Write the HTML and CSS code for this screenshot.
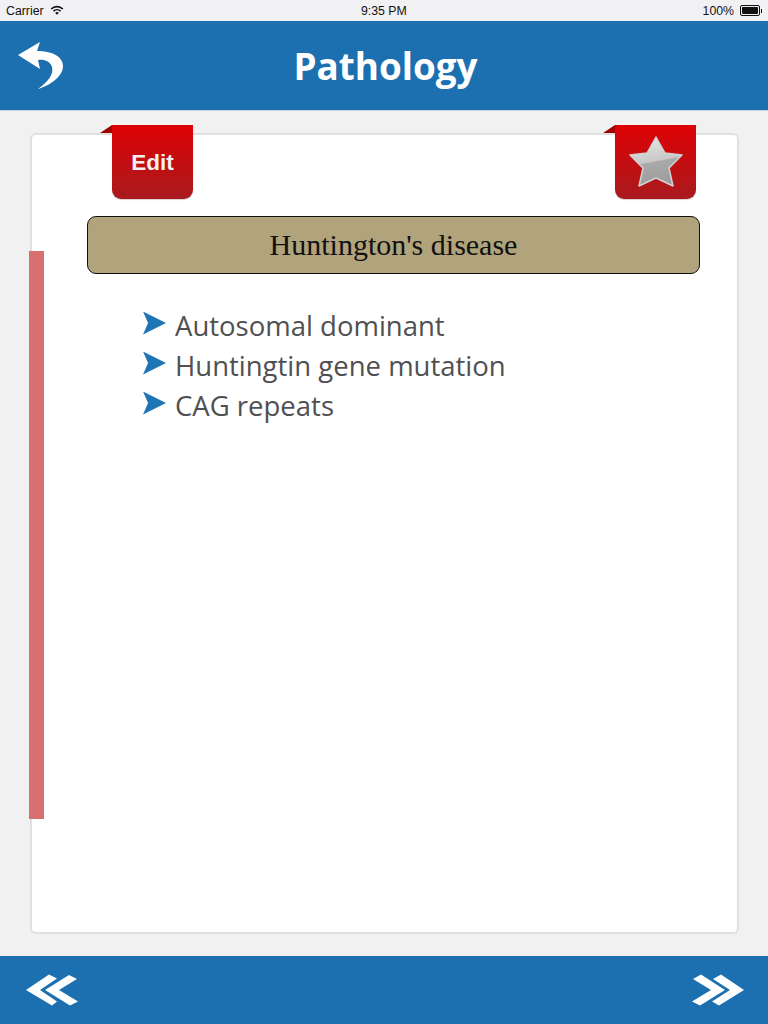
FILE: index.html
```html
<!DOCTYPE html>
<html lang="en">
<head>
    <meta charset="UTF-8">
    <meta name="viewport" content="width=device-width, initial-scale=1.0">
    <title>Pathology</title>
    <link rel="stylesheet" href="styles.css">
</head>
<body>
    <div class="status-bar">
        <div class="status-left">
            <span>Carrier</span>
            <svg class="wifi" width="14" height="10" viewBox="0 0 14 10">
                <path d="M0.6 3.4 A9 9 0 0 1 13.4 3.4 L12.2 4.6 A7.3 7.3 0 0 0 1.8 4.6 Z" fill="#111"/>
                <path d="M2.9 5.6 A5.8 5.8 0 0 1 11.1 5.6 L9.9 6.8 A4.1 4.1 0 0 0 4.1 6.8 Z" fill="#111"/>
                <path d="M5.2 7.9 A2.6 2.6 0 0 1 8.8 7.9 L7 9.8 Z" fill="#111"/>
            </svg>
        </div>
        <span class="status-time">9:35 PM</span>
        <div class="status-right">
            <span>100%</span>
            <span class="battery"><span class="battery-level"></span></span>
            <span class="battery-tip"></span>
        </div>
    </div>

    <header class="navbar">
        <button class="icon-button back-button" aria-label="Back">
            <svg width="46" height="48" viewBox="0 0 46 48">
                <path d="M0 14 L22 1 L19 10 C33 10 45 15 45 25 C45 35 33 44 20 48 C30 41 36 33 34 26 C32 20 26 18 20 19 L22 28 Z" fill="#fff"/>
            </svg>
        </button>
        <h1 class="navbar-title">Pathology</h1>
    </header>

    <main class="content">
        <section class="card">
            <div class="side-bar"></div>
            <div class="ribbons">
                <button class="ribbon">Edit</button>
                <button class="ribbon" aria-label="Favourite">
                    <svg width="54" height="52" viewBox="0 0 54 52">
                        <defs>
                            <linearGradient id="star-fill" x1="0.3" y1="0" x2="0.5" y2="1">
                                <stop offset="0" stop-color="#e6e6e6"/>
                                <stop offset="0.5" stop-color="#c8c8c8"/>
                                <stop offset="0.53" stop-color="#a9a9a9"/>
                                <stop offset="1" stop-color="#9c9c9c"/>
                            </linearGradient>
                        </defs>
                        <path d="M27 1 L36 17 L53 19 L40 32 L44 50 L27 42 L10 50 L14 32 L1 19 L18 17 Z" fill="url(#star-fill)" stroke="#d2d2d2" stroke-width="1.500" stroke-linejoin="round"/>
                    </svg>
                </button>
            </div>
            <h2 class="topic-title">Huntington's disease</h2>
            <ul class="points">
                <li class="point">Autosomal dominant</li>
                <li class="point">Huntingtin gene mutation</li>
                <li class="point">CAG repeats</li>
            </ul>
        </section>
    </main>

    <footer class="footer">
        <button class="icon-button" aria-label="Previous">
            <svg width="52" height="32" viewBox="0 0 52 32">
                <path d="M0 16 L23 0.5 L31 4.5 L14 16 L31 27.500 L26 31.500 Z" fill="#fff"/>
                <path d="M19 16 L43 1 L51 5 L33 16 L52 27.500 L44 31.500 Z" fill="#fff"/>
            </svg>
        </button>
        <button class="icon-button" aria-label="Next">
            <svg width="52" height="32" viewBox="0 0 52 32">
                <path d="M1 5 L9 0.5 L33 16 L8 31.500 L0 27.500 L19 16 Z" fill="#fff"/>
                <path d="M21 5 L29 0.5 L52 16 L27 31.500 L20 27.500 L38 16 Z" fill="#fff"/>
            </svg>
        </button>
    </footer>
</body>
</html>
```

FILE: styles.css
```css
html, body {
    margin: 0;
    padding: 0;
}
body {
    width: 768px;
    height: 1024px;
    display: flex;
    flex-direction: column;
    background-color: #f1f1f2;
    font-family: "Liberation Sans", Arial, sans-serif;
    overflow: hidden;
}
button {
    background: none;
    border: none;
    padding: 0;
    cursor: pointer;
}
.status-bar {
    height: 21px;
    padding: 0 6px;
    display: flex;
    align-items: center;
    justify-content: space-between;
    position: relative;
    font-size: 12.3px;
    color: #111;
    background-color: #f1f0f3;
}
.status-left, .status-right {
    display: flex;
    align-items: center;
}
.wifi {
    margin-left: 6px;
    margin-top: -1px;
}
.status-time {
    position: absolute;
    left: 361px;
}
.battery {
    width: 16px;
    height: 7px;
    margin-left: 6px;
    padding: 1px;
    border: 1px solid #111;
    border-radius: 2px;
}
.battery-level {
    display: block;
    height: 100%;
    background-color: #111;
    border-radius: 1px;
}
.battery-tip {
    width: 1px;
    height: 4px;
    margin-left: 1px;
    background-color: #111;
}
.navbar {
    height: 90px;
    position: relative;
    display: flex;
    align-items: center;
    justify-content: center;
    background-color: #1c70b0;
    border-bottom: 1px solid #c9d3dc;
    box-sizing: border-box;
    flex: none;
}
.back-button {
    position: absolute;
    left: 18px;
    top: 20px;
    height: 48px;
}
.navbar-title {
    margin: 1px 0 0 3px;
    font-family: "Open Sans", sans-serif;
    font-size: 36.8px;
    font-weight: 700;
    color: #fff;
}
.icon-button svg {
    display: block;
}
.content {
    flex: 1;
    padding: 22px 29px 22px 30px;
    display: flex;
}
.card {
    flex: 1;
    position: relative;
    background-color: #fff;
    border: 2px solid #e0e0e2;
    border-radius: 6px;
    box-sizing: border-box;
}
.side-bar {
    position: absolute;
    left: -3px;
    top: 116px;
    width: 15px;
    height: 568px;
    background-color: #d87071;
}
.ribbons {
    margin-top: -10px;
    padding: 0 41px 0 80px;
    display: flex;
    justify-content: space-between;
}
.ribbon {
    width: 81px;
    height: 74px;
    position: relative;
    display: flex;
    align-items: center;
    justify-content: center;
    font-family: "Liberation Sans", Arial, sans-serif;
    font-size: 22.5px;
    font-weight: 700;
    color: #f4eeee;
    padding-top: 2px;
    background: linear-gradient(#de0205, #a81a1e);
    border-radius: 0 0 9px 9px;
    box-shadow: 0 1px 1px #d9d0d0;
}
.ribbon svg {
    margin-top: -3px;
}
.ribbon::before {
    content: "";
    position: absolute;
    left: -12px;
    top: 0;
    border-bottom: 8px solid #a00000;
    border-left: 12px solid transparent;
}
.topic-title {
    margin: 17px 37px 0 55px;
    height: 58px;
    box-sizing: border-box;
    display: flex;
    align-items: center;
    justify-content: center;
    font-family: "Liberation Serif", "Times New Roman", serif;
    font-size: 30px;
    font-weight: 400;
    color: #111;
    background-color: #b1a37b;
    border: 1px solid #111;
    border-radius: 9px;
}
.points {
    list-style: none;
    margin: 31px 0 0 110px;
    padding: 0;
}
.point {
    height: 40px;
    display: flex;
    align-items: center;
    gap: 9px;
    font-family: "Open Sans", sans-serif;
    font-size: 27.5px;
    color: #505052;
}
.point::before {
    content: "";
    width: 23px;
    height: 23px;
    margin-left: 1px;
    margin-top: -4px;
    background-color: #1f74b4;
    clip-path: polygon(0 0, 100% 50%, 0 100%, 22% 50%);
}
.footer {
    height: 68px;
    padding: 0 24px 0 26px;
    display: flex;
    align-items: center;
    justify-content: space-between;
    background-color: #1c70b0;
    flex: none;
}
```
